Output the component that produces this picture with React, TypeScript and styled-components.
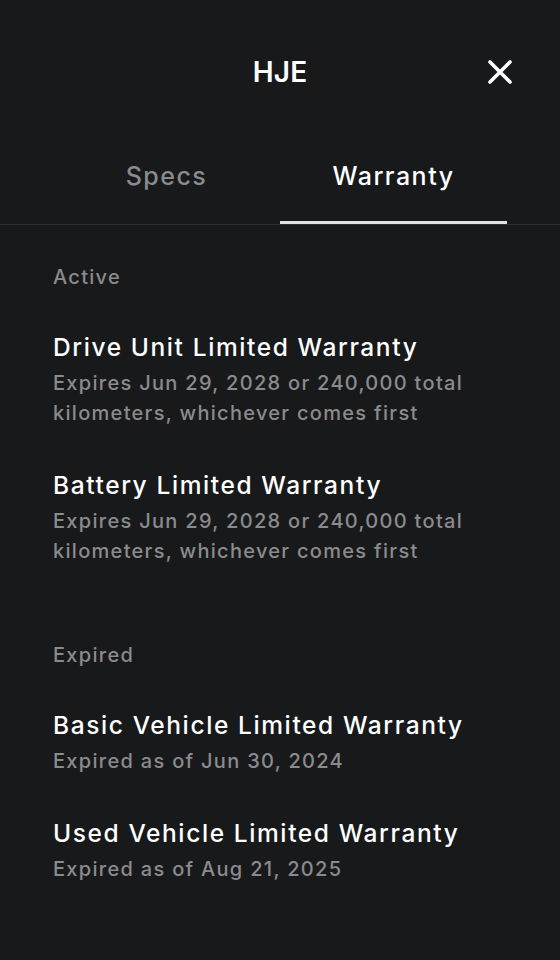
import React from 'react';
import styled, { createGlobalStyle } from 'styled-components';

const GlobalStyle = createGlobalStyle`
  html, body {
    margin: 0;
    padding: 0;
    background: #18191b;
  }
  body {
    font-family: Inter, "Noto Sans", "Liberation Sans", sans-serif;
    -webkit-font-smoothing: antialiased;
  }
`;

const Screen = styled.div`
  width: 560px;
  min-height: 960px;
  background: #18191b;
  color: #ffffff;
`;

const Header = styled.header`
  position: relative;
  height: 144px;
  display: flex;
  align-items: center;
  justify-content: center;
`;

const Title = styled.h1`
  margin: 0;
  font-size: 28px;
  font-weight: 600;
  letter-spacing: 0.2px;
`;

const CloseButton = styled.button`
  position: absolute;
  right: 44px;
  top: 56px;
  width: 32px;
  height: 32px;
  padding: 0;
  border: none;
  background: none;
  color: #ffffff;
  display: flex;
  align-items: center;
  justify-content: center;
  cursor: pointer;
`;

const TabBar = styled.nav`
  display: flex;
  padding: 0 53px;
  border-bottom: 1px solid #2f3033;
`;

const Tab = styled.button<{ $active?: boolean }>`
  flex: 1;
  height: 80px;
  padding: 0 0 14px;
  border: none;
  border-bottom: 3px solid ${(p) => (p.$active ? '#e2e2e2' : 'transparent')};
  background: none;
  font-family: inherit;
  font-size: 25px;
  font-weight: 500;
  letter-spacing: 1.5px;
  color: ${(p) => (p.$active ? '#ffffff' : '#8b8b8d')};
  cursor: pointer;
`;

const Content = styled.main`
  padding: 37px 53px 40px;
`;

const Section = styled.section`
  & + & {
    margin-top: 74px;
  }
`;

const SectionLabel = styled.div`
  font-size: 20px;
  line-height: 30px;
  font-weight: 500;
  letter-spacing: 1.3px;
  color: #8b8b8d;
  margin-bottom: 38px;
`;

const Item = styled.div`
  & + & {
    margin-top: 40px;
  }
`;

const ItemTitle = styled.div`
  font-size: 24.5px;
  line-height: 34px;
  font-weight: 500;
  letter-spacing: 1.6px;
  color: #ffffff;
`;

const ItemText = styled.div`
  margin-top: 4px;
  font-size: 20px;
  line-height: 30px;
  font-weight: 500;
  letter-spacing: 1.3px;
  color: #8b8b8d;
`;

const sections = [
  {
    label: 'Active',
    items: [
      {
        title: 'Drive Unit Limited Warranty',
        text: 'Expires Jun 29, 2028 or 240,000 total kilometers, whichever comes first',
      },
      {
        title: 'Battery Limited Warranty',
        text: 'Expires Jun 29, 2028 or 240,000 total kilometers, whichever comes first',
      },
    ],
  },
  {
    label: 'Expired',
    items: [
      { title: 'Basic Vehicle Limited Warranty', text: 'Expired as of Jun 30, 2024' },
      { title: 'Used Vehicle Limited Warranty', text: 'Expired as of Aug 21, 2025' },
    ],
  },
];

export default function App() {
  return (
    <Screen>
      <GlobalStyle />
      <Header>
        <Title>HJE</Title>
        <CloseButton aria-label="Close">
          <svg width="26" height="26" viewBox="0 0 26 26" fill="none">
            <path d="M3 3L23 23M23 3L3 23" stroke="currentColor" strokeWidth="3.6" strokeLinecap="round" />
          </svg>
        </CloseButton>
      </Header>
      <TabBar>
        <Tab>Specs</Tab>
        <Tab $active>Warranty</Tab>
      </TabBar>
      <Content>
        {sections.map((s) => (
          <Section key={s.label}>
            <SectionLabel>{s.label}</SectionLabel>
            {s.items.map((it) => (
              <Item key={it.title}>
                <ItemTitle>{it.title}</ItemTitle>
                <ItemText>{it.text}</ItemText>
              </Item>
            ))}
          </Section>
        ))}
      </Content>
    </Screen>
  );
}
